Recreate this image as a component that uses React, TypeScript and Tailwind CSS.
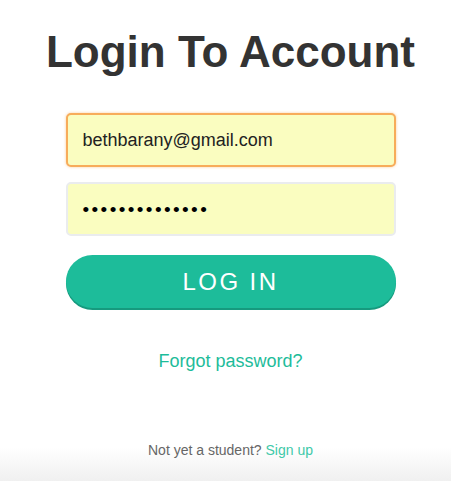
import React from "react";

export default function App() {
  return (
    <div
      className="w-[451px] h-[481px] bg-white flex flex-col items-center overflow-hidden"
      style={{ fontFamily: '"Liberation Sans", Arial, sans-serif' }}
    >
      <div className="w-full flex flex-col items-center pl-[10px]">
        {/* Title */}
        <h1 className="mt-[26px] text-[44px] leading-[52px] font-bold text-[#333333]">
          Login To Account
        </h1>

        {/* Form */}
        <form className="mt-[35px] w-[330px] flex flex-col">
          <input
            type="email"
            readOnly
            value="bethbarany@gmail.com"
            className="h-[54px] w-full rounded-[5px] border-2 border-[#f7ac5a] bg-[#fafdc0] px-[15px] text-[18px] text-[#222222] outline-none shadow-[0_0_3px_rgba(247,172,90,0.6)]"
          />
          <div className="mt-[15px] h-[54px] w-full rounded-[5px] border-2 border-[#eaecee] bg-[#fafdc0] px-[15px] flex items-center">
            <span className="text-[19px] tracking-[2.4px] text-black leading-none">••••••••••••••</span>
          </div>
          <button
            type="button"
            className="mt-[19px] h-[53px] w-full rounded-full bg-[#1dbc9a] shadow-[0_2px_0_#169a7e] text-white text-[24px] tracking-[0.1em] flex items-center justify-center"
          >
            LOG IN
          </button>
        </form>

        <a className="mt-[40px] text-[18px] text-[#1dbc9a]">Forgot password?</a>
      </div>

      {/* Footer */}
      <div className="mt-auto w-full h-[45px] flex justify-center pl-[10px] pt-[4px] bg-gradient-to-b from-white from-[25%] to-[#f0f0f0]">
        <p className="text-[14px] text-[#666666]">
          Not yet a student? <a className="text-[#3fc9a9]">Sign up</a>
        </p>
      </div>
    </div>
  );
}
